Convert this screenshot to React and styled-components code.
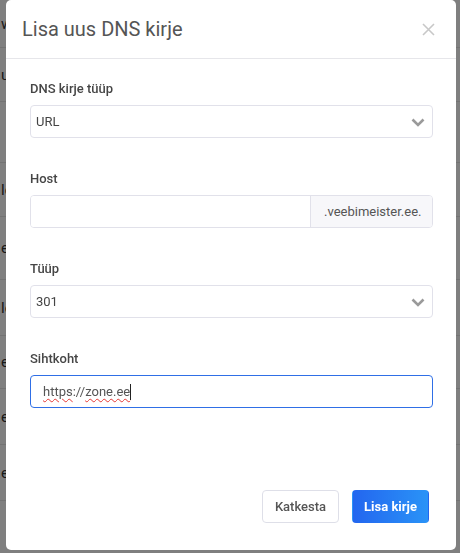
import styled, { createGlobalStyle } from "styled-components"

const GlobalStyle = createGlobalStyle`
    html, body {
        margin: 0;
        padding: 0;
        background: #ffffff;
        font-family: Roboto, "Liberation Sans", Arial, sans-serif;
        overflow: hidden;
    }
`

const backRows = [
    { h: 47, t: "www" },
    { h: 53, t: "url" },
    { h: 60, t: "" },
    { h: 53, t: "lc" },
    { h: 62, t: "ee" },
    { h: 55, t: "lc" },
    { h: 52, t: "ee" },
    { h: 55, t: "ee" },
    { h: 55, t: "ee" },
    { h: 60, t: "" },
]

const App = () => {
    return (
        <>
            <GlobalStyle />
            <Page>
                {backRows.map((row, i) => (
                    <BackRow key={i} style={{ height: row.h }}>
                        <BackCell>{row.t}</BackCell>
                    </BackRow>
                ))}
            </Page>
            <Backdrop />
            <Modal>
                <Header>
                    <Title>Lisa uus DNS kirje</Title>
                    <CloseButton aria-label="Sulge">
                        <svg width="13" height="13" viewBox="0 0 13 13">
                            <path d="M1 1L12 12M12 1L1 12" stroke="#c8c8c8" strokeWidth="1.6" />
                        </svg>
                    </CloseButton>
                </Header>
                <Body>
                    <Field>
                        <Label>DNS kirje tüüp</Label>
                        <SelectBox>
                            <span>URL</span>
                            <Chevron />
                        </SelectBox>
                    </Field>
                    <Field>
                        <Label>Host</Label>
                        <InputGroup>
                            <GroupInput />
                            <Addon>.veebimeister.ee.</Addon>
                        </InputGroup>
                    </Field>
                    <Field>
                        <Label>Tüüp</Label>
                        <SelectBox>
                            <span>301</span>
                            <Chevron />
                        </SelectBox>
                    </Field>
                    <Field>
                        <Label>Sihtkoht</Label>
                        <TextBox $focused>
                            <Misspelled>https</Misspelled>://<Misspelled>zone.ee</Misspelled>
                            <Caret />
                        </TextBox>
                    </Field>
                </Body>
                <Footer>
                    <Button>Katkesta</Button>
                    <Button $primary>Lisa kirje</Button>
                </Footer>
            </Modal>
        </>
    )
}

const Chevron = () => (
    <ChevronIcon width="14" height="9" viewBox="0 0 14 9">
        <path d="M1.5 1.5L7 7L12.5 1.5" fill="none" stroke="#9a9a9a" strokeWidth="2.6" />
    </ChevronIcon>
)

export default App

const Page = styled.div`
    width: 460px;
    height: 553px;
    display: flex;
    flex-direction: column;
`

const BackRow = styled.div`
    display: flex;
    align-items: center;
    border-bottom: 1px solid #e6e6e6;
    flex-shrink: 0;
`

const BackCell = styled.div`
    padding-left: 1px;
    font-size: 15px;
    color: #333;
    white-space: nowrap;
`

const Backdrop = styled.div`
    position: fixed;
    inset: 0;
    background: rgba(0, 0, 0, 0.5);
`

const Modal = styled.div`
    position: absolute;
    left: 6px;
    top: 0;
    width: 450px;
    height: 550px;
    background: #ffffff;
    border-radius: 5px;
    display: flex;
    flex-direction: column;
    box-sizing: border-box;
`

const Header = styled.div`
    display: flex;
    align-items: center;
    justify-content: space-between;
    padding: 17px 21px 17px 16px;
    border-bottom: 1px solid #e6e6ea;
`

const Title = styled.h4`
    margin: 0;
    font-size: 20px;
    line-height: 24px;
    font-weight: 400;
    color: #555;
`

const CloseButton = styled.button`
    border: 0;
    background: none;
    padding: 0;
    display: flex;
    margin-top: 1px;
`

const Body = styled.div`
    padding: 21px 23px 0 24px;
    display: flex;
    flex-direction: column;
    gap: 32px;
`

const Field = styled.div`
    display: flex;
    flex-direction: column;
    gap: 7px;
`

const Label = styled.label`
    font-size: 13px;
    line-height: 18px;
    font-weight: 500;
    color: #464646;
`

const SelectBox = styled.div`
    height: 33px;
    box-sizing: border-box;
    border: 1px solid #e1e1ea;
    border-radius: 4px;
    padding: 0 7px 0 5px;
    display: flex;
    align-items: center;
    justify-content: space-between;
    font-size: 13px;
    color: #444;
`

const ChevronIcon = styled.svg`
    display: block;
    margin-top: 2px;
`

const InputGroup = styled.div`
    display: flex;
    height: 33px;
    box-sizing: border-box;
    border: 1px solid #e1e1ea;
    border-radius: 4px;
    overflow: hidden;
`

const GroupInput = styled.input`
    flex: 1;
    min-width: 0;
    border: 0;
    outline: none;
    padding: 0 12px;
    font-family: inherit;
    font-size: 13px;
`

const Addon = styled.div`
    width: 122px;
    box-sizing: border-box;
    background: #f7f7fa;
    border-left: 1px solid #e1e1ea;
    display: flex;
    align-items: center;
    padding-left: 13px;
    font-size: 13px;
    color: #555;
`

const TextBox = styled.div`
    height: 33px;
    box-sizing: border-box;
    border: 1px solid ${(p) => (p.$focused ? "#2f6fe6" : "#e1e1ea")};
    border-radius: 4px;
    padding: 0 12px;
    display: flex;
    align-items: center;
    font-size: 13px;
    color: #555;
    white-space: pre;
`

const Misspelled = styled.span`
    text-decoration: underline wavy #e53935;
    text-decoration-thickness: 1px;
    text-underline-offset: 2px;
`

const Caret = styled.span`
    width: 1px;
    height: 16px;
    background: #222;
`

const Footer = styled.div`
    margin-top: auto;
    display: flex;
    justify-content: flex-end;
    gap: 13px;
    padding: 0 27px 27px;
`

const Button = styled.button`
    width: 77px;
    height: 33px;
    box-sizing: border-box;
    border-radius: 4px;
    font-family: inherit;
    font-size: 13px;
    cursor: pointer;
    border: 1px solid ${(p) => (p.$primary ? "transparent" : "#dedfe8")};
    background: ${(p) => (p.$primary ? "linear-gradient(90deg, #2366ef, #2a93f7)" : "#ffffff")};
    color: ${(p) => (p.$primary ? "#ffffff" : "#555")};
    font-weight: ${(p) => (p.$primary ? 700 : 500)};
`
